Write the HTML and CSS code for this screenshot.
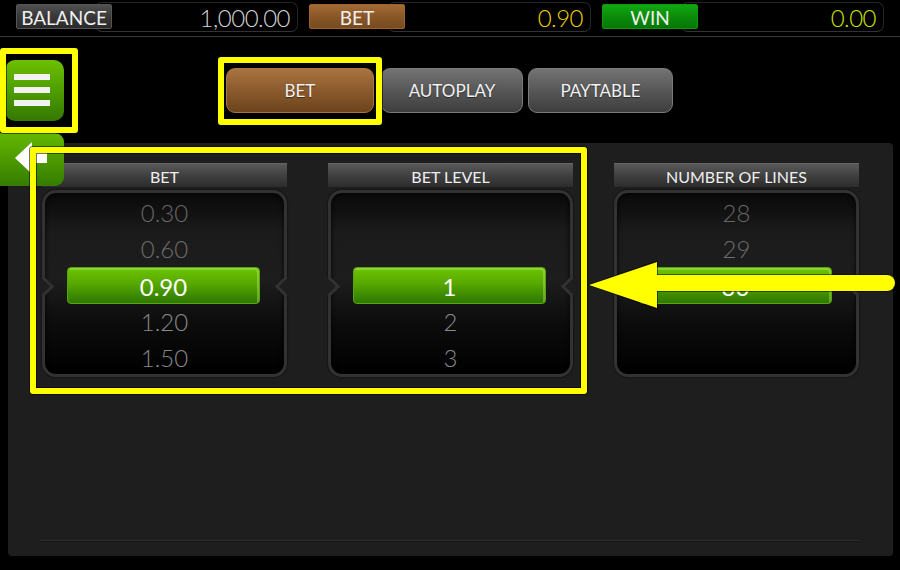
FILE: index.html
```html
<!DOCTYPE html>
<html lang="en">
<head>
<meta charset="utf-8">
<title>Bet settings</title>
<link rel="stylesheet" href="styles.css">
</head>
<body>
<div class="screen">
  <header class="topbar">
    <div class="stat">
      <span class="stat-label label-gray">BALANCE</span>
      <span class="stat-value value-white">1,000.00</span>
    </div>
    <div class="stat">
      <span class="stat-label label-brown">BET</span>
      <span class="stat-value value-gold">0.90</span>
    </div>
    <div class="stat">
      <span class="stat-label label-green">WIN</span>
      <span class="stat-value value-lime">0.00</span>
    </div>
  </header>

  <nav class="menu-row">
    <button class="menu-btn" aria-label="Menu"><span></span><span></span><span></span></button>
    <div class="tabs">
      <button class="tab tab-active">BET</button>
      <button class="tab tab-auto">AUTOPLAY</button>
      <button class="tab tab-pay">PAYTABLE</button>
    </div>
  </nav>

  <main class="panel">
    <div class="columns">
      <section class="col">
        <h2 class="col-head">BET</h2>
        <div class="wheel">
          <div class="row far">0.30</div>
          <div class="row near-up">0.60</div>
          <div class="row selected">0.90</div>
          <div class="row near-down">1.20</div>
          <div class="row far-down">1.50</div>
        </div>
      </section>
      <section class="col">
        <h2 class="col-head">BET LEVEL</h2>
        <div class="wheel">
          <div class="row far"></div>
          <div class="row near-up"></div>
          <div class="row selected">1</div>
          <div class="row near-down">2</div>
          <div class="row far-down">3</div>
        </div>
      </section>
      <section class="col">
        <h2 class="col-head">NUMBER OF LINES</h2>
        <div class="wheel">
          <div class="row far">28</div>
          <div class="row near-up">29</div>
          <div class="row selected">30</div>
          <div class="row near-down"></div>
          <div class="row far-down"></div>
        </div>
      </section>
    </div>
    <div class="panel-rule"></div>
  </main>

  <button class="back-tab" aria-label="Back">
    <svg width="64" height="53" viewBox="0 0 64 53">
      <polygon points="15,25 32,9 32,20 47,20 47,30 32,30 32,41" fill="#ffffff"/>
    </svg>
  </button>

  <div class="mark mark-menu"></div>
  <div class="mark mark-tab"></div>
  <div class="mark mark-cols"></div>
  <svg class="mark-arrow" width="320" height="70" viewBox="580 250 320 70">
    <line x1="650" y1="283" x2="887" y2="283" stroke="#000" stroke-opacity="0.5" stroke-width="18" stroke-linecap="round"/>
    <polygon points="587,285 658,260 658,310" fill="#000" fill-opacity="0.5"/>
    <line x1="650" y1="283" x2="887" y2="283" stroke="#ffff00" stroke-width="16" stroke-linecap="round"/>
    <polygon points="589,285 657,262 657,308" fill="#ffff00"/>
  </svg>
</div>
</body>
</html>
```

FILE: styles.css
```css
* { box-sizing: border-box; }

html, body {
  margin: 0;
  padding: 0;
  background: #000;
}

body {
  font-family: Lato, "Open Sans", "DejaVu Sans", sans-serif;
  color: #eee;
}

.screen {
  position: relative;
  width: 900px;
  height: 570px;
  overflow: hidden;
  background: #000;
}

/* ---------- top bar ---------- */
.topbar {
  display: flex;
  align-items: center;
  gap: 11px;
  height: 37px;
  padding: 0 0 3px 16px;
  border-bottom: 1px solid #3a3a3a;
}

.stat {
  display: flex;
  align-items: center;
  width: 282px;
}

.stat-label {
  position: relative;
  z-index: 1;
  width: 96px;
  height: 25px;
  line-height: 25px;
  text-align: center;
  font-size: 19px;
  color: #f0f0f0;
  border-radius: 2px;
}

.label-gray {
  background: linear-gradient(#505050, #383838 50%, #2a2a2a);
  border: 1px solid #555;
}

.label-brown {
  background: linear-gradient(#a56a34, #8a5727 50%, #774a1f);
  border: 1px solid #9a6430;
}

.label-green {
  background: linear-gradient(#11a811, #0a8c0a 50%, #067606);
  border: 1px solid #0e980e;
}

.stat-value {
  margin-left: -17px;
  width: 203px;
  height: 30px;
  line-height: 30px;
  padding-right: 7px;
  text-align: right;
  font-size: 24px;
  font-weight: 300;
  letter-spacing: -0.5px;
  background: #000;
  border: 1px solid #242424;
  border-bottom-color: #333;
  border-radius: 7px;
}

.value-white { color: #d4d4d4; }
.value-gold { color: #f2d000; }
.value-lime { color: #cde000; }

/* ---------- menu row ---------- */
.menu-row {
  display: flex;
  align-items: center;
  height: 106px;
  padding-left: 5px;
}

.menu-btn {
  display: flex;
  flex-direction: column;
  justify-content: center;
  align-items: center;
  gap: 7px;
  width: 59px;
  height: 61px;
  padding: 0 5px 0 0;
  border: 0;
  border-radius: 10px;
  background: linear-gradient(#6cc000, #4f9e00 50%, #327800);
}

.menu-btn span {
  display: block;
  width: 36px;
  height: 6px;
  background: #f2f2f2;
}

.tabs {
  display: flex;
  margin-left: 162px;
}

.tab {
  height: 45px;
  padding: 0;
  font-family: Lato, "Open Sans", sans-serif;
  font-size: 17px;
  color: #f2f2f2;
  border: 1px solid #7a7a7a;
  border-radius: 9px;
  background: linear-gradient(#737373, #575757 50%, #3e3e3e);
  text-shadow: 0 1px 1px rgba(0,0,0,.5);
}

.tab-active {
  width: 148px;
  border-color: #a87440;
  background: linear-gradient(#aa7440, #8b5a2c 50%, #6c431c);
}

.tab-auto {
  width: 142px;
  margin-left: 7px;
}

.tab-pay {
  width: 145px;
  margin-left: 5px;
}

/* ---------- panel ---------- */
.panel {
  display: flex;
  flex-direction: column;
  height: 413px;
  margin: 0 7px 0 8px;
  background: #1e1e1e;
  border-radius: 4px;
}

.columns {
  display: flex;
  gap: 41px;
  padding: 20px 0 0 34px;
}

.col {
  width: 245px;
}

.col-head {
  margin: 0 0 3px;
  height: 24px;
  line-height: 25px;
  text-align: center;
  font-size: 16px;
  font-weight: 400;
  color: #efefef;
  background: linear-gradient(#595959, #404040 50%, #2c2c2c);
  border-top: 1px solid #646464;
}

.wheel {
  position: relative;
  height: 187px;
  padding-top: 2px;
  border: 3px solid #323232;
  border-radius: 14px;
  background: linear-gradient(#090909 0%, #1b1b1b 22%, #1d1d1d 48%, #0c0c0c 72%, #000 100%);
  box-shadow: inset 0 0 5px rgba(0,0,0,.9), 0 0 2px #000;
}

.wheel::before,
.wheel::after {
  content: "";
  position: absolute;
  top: 86px;
  width: 12px;
  height: 12px;
  background: #1e1e1e;
  transform: rotate(45deg);
}

.wheel::before {
  left: -9px;
  border-top: 3px solid #323232;
  border-right: 3px solid #323232;
}

.wheel::after {
  right: -9px;
  border-bottom: 3px solid #323232;
  border-left: 3px solid #323232;
}

.row {
  height: 36px;
  line-height: 36px;
  text-align: center;
  font-size: 24px;
  font-weight: 300;
  color: #777;
}

.row.far { color: #666; }
.row.near-up { color: #6c6c6c; }
.row.near-down { color: #8a8a8a; }
.row.far-down { color: #888; }

.row.selected {
  height: 37px;
  line-height: 37px;
  margin: 0 24px 0 22px;
  color: #fff;
  font-weight: 400;
  border: 1px solid #58a800;
  border-radius: 4px;
  background: linear-gradient(#6dc400, #57a800 45%, #3c8800 80%, #2f7800);
  box-shadow: inset -2px 2px 0 rgba(200,240,150,.35);
}

.panel-rule {
  margin: auto 33px 14px 32px;
  border-top: 1px solid #2d2d2d;
  border-bottom: 1px solid #161616;
}

/* ---------- overlays ---------- */
.back-tab {
  position: absolute;
  left: 0;
  top: 133px;
  width: 64px;
  height: 53px;
  padding: 0;
  border: 0;
  border-radius: 0 9px 9px 0;
  background: linear-gradient(#64b800, #4c9a00 50%, #347c00);
}

.back-tab svg { display: block; }

.mark {
  position: absolute;
  border: 6px solid #ffff00;
  border-radius: 3px;
  box-shadow: 0 0 0 1px rgba(0,0,0,.55), inset 0 0 0 1px rgba(0,0,0,.55);
}

.mark-menu {
  left: 0;
  top: 48px;
  width: 78px;
  height: 85px;
}

.mark-tab {
  left: 218px;
  top: 57px;
  width: 164px;
  height: 68px;
}

.mark-cols {
  left: 30px;
  top: 147px;
  width: 557px;
  height: 247px;
}

.mark-arrow {
  position: absolute;
  left: 580px;
  top: 250px;
}
```
